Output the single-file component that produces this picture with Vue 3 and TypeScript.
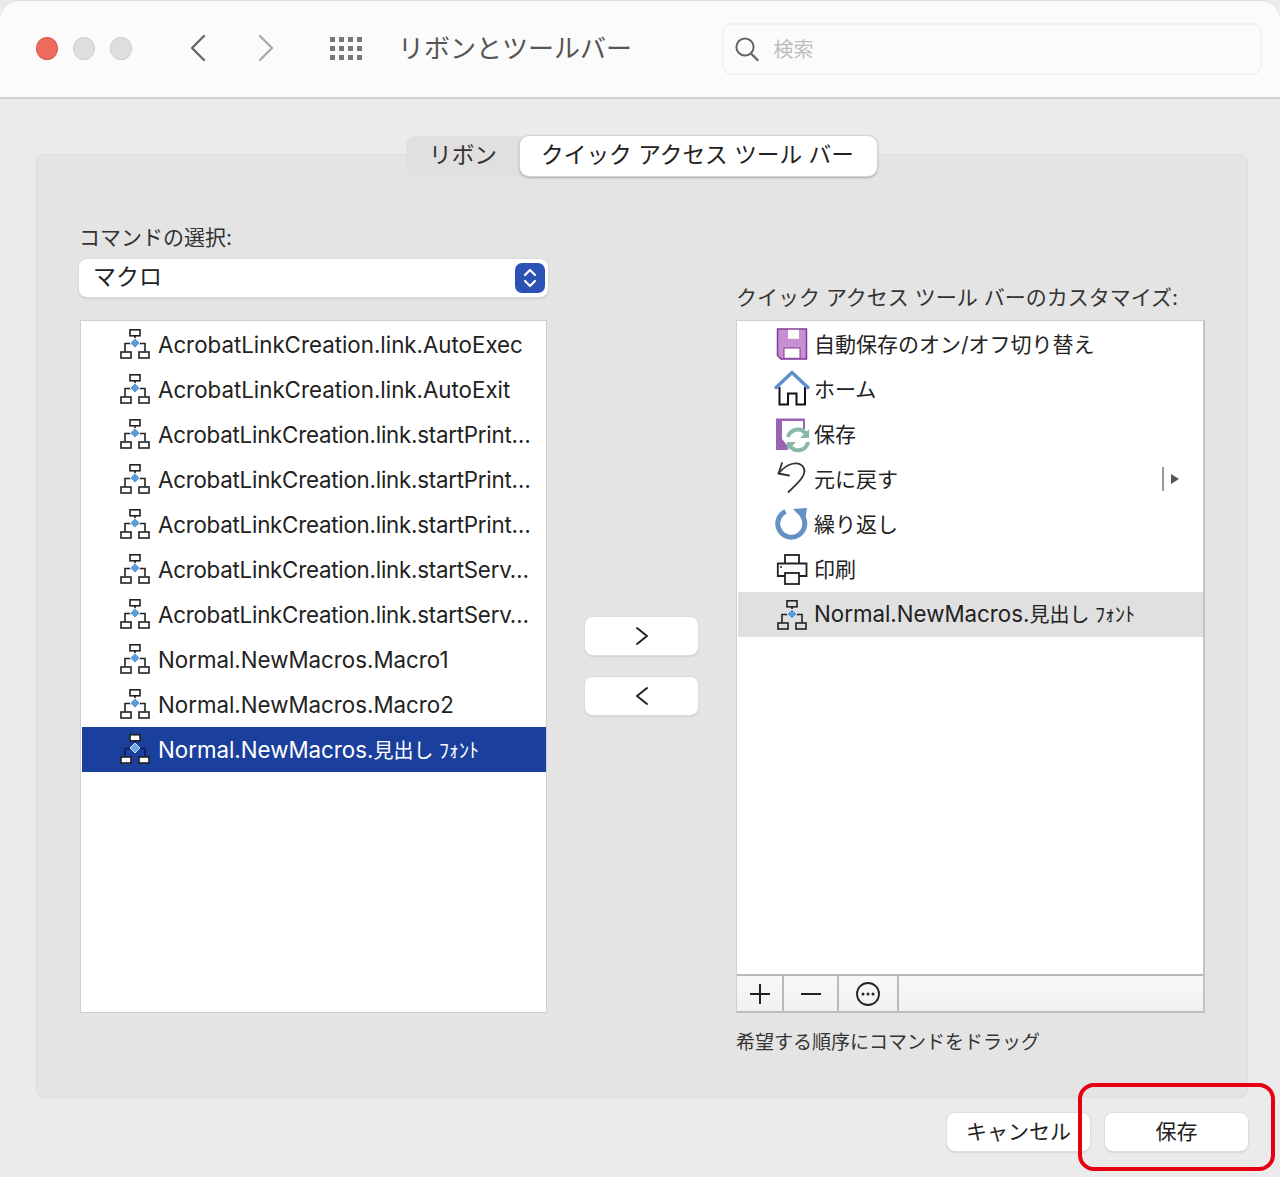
<script setup lang="ts">
const macroNames = [
  { name: 'AcrobatLinkCreation.link.AutoExec' },
  { name: 'AcrobatLinkCreation.link.AutoExit' },
  { name: 'AcrobatLinkCreation.link.startPrint…' },
  { name: 'AcrobatLinkCreation.link.startPrint…' },
  { name: 'AcrobatLinkCreation.link.startPrint…' },
  { name: 'AcrobatLinkCreation.link.startServ…' },
  { name: 'AcrobatLinkCreation.link.startServ…' },
  { name: 'Normal.NewMacros.Macro1' },
  { name: 'Normal.NewMacros.Macro2' },
  { name: 'Normal.NewMacros.', ja: '見出し ﾌｫﾝﾄ' }
];

const quickItems = [
  { icon: 'floppy', ja: '自動保存のオン/オフ切り替え' },
  { icon: 'home', ja: 'ホーム' },
  { icon: 'save', ja: '保存' },
  { icon: 'undo', ja: '元に戻す', more: true },
  { icon: 'redo', ja: '繰り返し' },
  { icon: 'print', ja: '印刷' },
  { icon: 'macro', name: 'Normal.NewMacros.', ja: '見出し ﾌｫﾝﾄ', selected: true }
];

const selectedMacro = macroNames.length - 1;
</script>

<template>
  <div class="window">
    <header class="toolbar">
      <div class="lights">
        <span class="light red"></span>
        <span class="light"></span>
        <span class="light"></span>
      </div>
      <svg class="nav-icon" width="18" height="28" viewBox="0 0 18 28" fill="none">
        <path d="M15 2L3 14L15 26" stroke="#666" stroke-width="2.4" stroke-linecap="round" stroke-linejoin="round" />
      </svg>
      <svg class="nav-icon next" width="18" height="28" viewBox="0 0 18 28" fill="none">
        <path d="M3 2L15 14L3 26" stroke="#aaa" stroke-width="2.4" stroke-linecap="round" stroke-linejoin="round" />
      </svg>
      <div class="apps">
        <span v-for="n in 12" :key="n"></span>
      </div>
      <h1 class="title">リボンとツールバー</h1>
      <div class="search">
        <svg width="26" height="26" viewBox="0 0 26 26" fill="none">
          <circle cx="11" cy="11" r="8.6" stroke="#666" stroke-width="2" />
          <path d="M17 17.5L23.5 24" stroke="#666" stroke-width="2.4" stroke-linecap="round" />
        </svg>
        <span>検索</span>
      </div>
    </header>

    <main class="content">
      <div class="tabs">
        <div class="tab">リボン</div>
        <div class="tab active">クイック アクセス ツール バー</div>
      </div>

      <section class="panel">
        <div class="col">
          <div class="label">コマンドの選択:</div>
          <div class="select">
            <span class="select-text">マクロ</span>
            <div class="stepper">
              <svg width="16" height="24" viewBox="0 0 16 24" fill="none">
                <path d="M3 9L8 4L13 9M3 15L8 20L13 15" stroke="#fff" stroke-width="2.2" stroke-linecap="round" stroke-linejoin="round" />
              </svg>
            </div>
          </div>
          <ul class="list left-list">
            <li
              v-for="(item, i) in macroNames"
              :key="i"
              class="row"
              :class="{ selected: i === selectedMacro, cut: item.name.endsWith('…') }"
            >
              <svg class="macro" width="30" height="32" viewBox="0 0 30 32" fill="none">
                <path d="M15 7V15M5 23.5V15.500H25V23.500" :stroke="i === selectedMacro ? '#0d1f50' : '#222'" stroke-width="1.600" />
                <rect x="10" y="1.800" width="10" height="6" :fill="i === selectedMacro ? '#fff' : 'none'" stroke="#222" stroke-width="1.600" />
                <rect x="1" y="24" width="10" height="6" :fill="i === selectedMacro ? '#fff' : 'none'" stroke="#222" stroke-width="1.600" />
                <rect x="19" y="24" width="10" height="6" :fill="i === selectedMacro ? '#fff' : 'none'" stroke="#222" stroke-width="1.600" />
                <path d="M15 10L20 15L15 20L10 15Z" :fill="i === selectedMacro ? '#6ea6ea' : '#5b9bd8'" stroke="#fff" stroke-width=".8" />
              </svg>
              <span class="name">{{ item.name }}<span v-if="item.ja" class="ja tail">{{ item.ja }}</span></span>
            </li>
          </ul>
        </div>

        <div class="mid">
          <button class="btn move">
            <svg width="14" height="20" viewBox="0 0 14 20" fill="none">
              <path d="M2 2L12 10L2 18" stroke="#222" stroke-width="2" stroke-linecap="round" stroke-linejoin="round" />
            </svg>
          </button>
          <button class="btn move">
            <svg width="14" height="20" viewBox="0 0 14 20" fill="none">
              <path d="M12 2L2 10L12 18" stroke="#222" stroke-width="2" stroke-linecap="round" stroke-linejoin="round" />
            </svg>
          </button>
        </div>

        <div class="col right">
          <div class="label">クイック アクセス ツール バーのカスタマイズ:</div>
          <div class="list right-list">
            <ul class="quick">
              <li
                v-for="item in quickItems"
                :key="item.icon"
                class="row"
                :class="{ current: item.selected }"
              >
                <svg class="qicon" width="38" height="38" viewBox="0 0 38 38" fill="none">
                  <g v-if="item.icon === 'floppy'">
                    <path d="M4.500 4H33.500V34H8L4.500 30.500Z" fill="#c58fd2" stroke="#86399a" stroke-width="1.500" />
                    <rect x="15" y="4.800" width="11" height="9" fill="#fff" />
                    <rect x="11" y="23" width="16" height="10.300" fill="#fff" stroke="#86399a" stroke-width="1" />
                  </g>
                  <g v-else-if="item.icon === 'home'">
                    <path d="M6.500 17V34.500H15V23.500H23.500V34.500H32V17" stroke="#111" stroke-width="2" />
                    <path d="M2 18.500L19 2.500L36 18.500" stroke="#5b8fc9" stroke-width="3.400" stroke-linejoin="miter" />
                  </g>
                  <g v-else-if="item.icon === 'save'">
                    <path d="M3 3.500H32V14H30V6H9V24L14 30V35H3Z" fill="#9a62b2" />
                    <path d="M15 22A10 10 0 0 1 33 19" stroke="#88b8a8" stroke-width="4" />
                    <path d="M35 27A10 10 0 0 1 17 31" stroke="#88b8a8" stroke-width="4" />
                    <path d="M36 14V23H27Z" fill="#88b8a8" />
                    <path d="M14 36V27H23Z" fill="#88b8a8" />
                  </g>
                  <g v-else-if="item.icon === 'undo'">
                    <path d="M9 3L5.500 13.500L16 15.500" stroke="#333" stroke-width="1.800" stroke-linecap="round" stroke-linejoin="round" />
                    <path d="M5.500 13.500C14 3 26 0 30.500 7.500C34 14 28 20 15.500 32" stroke="#333" stroke-width="1.800" stroke-linecap="round" />
                  </g>
                  <g v-else-if="item.icon === 'redo'">
                    <path d="M12.500 6.500A13.500 13.500 0 1 0 29 10.500" stroke="#6492c6" stroke-width="5" />
                    <path d="M20 4L34 3L32 16.500Z" fill="#6492c6" />
                  </g>
                  <g v-else-if="item.icon === 'print'">
                    <rect x="12" y="5" width="14" height="12" fill="#fff" stroke="#222" stroke-width="1.800" />
                    <path d="M12 26H4.800V13.500H33.500V26H26" fill="#fff" />
                    <path d="M12 26H4.800V13.500H33.500V26H26" stroke="#222" stroke-width="1.800" />
                    <rect x="12" y="23" width="14" height="11" fill="#fff" stroke="#222" stroke-width="1.800" />
                    <circle cx="8" cy="17" r="1" fill="#222" />
                  </g>
                  <g v-else transform="translate(4 4)">
                    <path d="M15 7V15M5 23.500V15.500H25V23.500" stroke="#222" stroke-width="1.600" />
                    <rect x="10" y="1.800" width="10" height="6" stroke="#222" stroke-width="1.600" />
                    <rect x="1" y="24" width="10" height="6" stroke="#222" stroke-width="1.600" />
                    <rect x="19" y="24" width="10" height="6" stroke="#222" stroke-width="1.600" />
                    <path d="M15 10L20 15L15 20L10 15Z" fill="#5b9bd8" stroke="#fff" stroke-width=".8" />
                  </g>
                </svg>
                <span class="name">{{ item.name }}<span class="ja" :class="{ tail: item.name }">{{ item.ja }}</span></span>
                <span v-if="item.more" class="more"></span>
              </li>
            </ul>
            <div class="list-footer">
              <div class="foot-btn plus">
                <svg width="22" height="22" viewBox="0 0 22 22" fill="none">
                  <path d="M11 1V21M1 11H21" stroke="#222" stroke-width="2" />
                </svg>
              </div>
              <div class="foot-btn minus">
                <svg width="22" height="22" viewBox="0 0 22 22" fill="none">
                  <path d="M1 11H21" stroke="#222" stroke-width="2" />
                </svg>
              </div>
              <div class="foot-btn dots">
                <svg width="26" height="26" viewBox="0 0 26 26" fill="none">
                  <circle cx="13" cy="13" r="11" stroke="#222" stroke-width="1.800" />
                  <circle cx="8" cy="13" r="1.500" fill="#222" />
                  <circle cx="13" cy="13" r="1.500" fill="#222" />
                  <circle cx="18" cy="13" r="1.500" fill="#222" />
                </svg>
              </div>
            </div>
          </div>
          <div class="hint">希望する順序にコマンドをドラッグ</div>
        </div>
      </section>

      <footer class="actions">
        <button class="btn action">キャンセル</button>
        <button class="btn action">保存</button>
      </footer>
    </main>

    <div class="highlight"></div>
  </div>
</template>

<style scoped>
* {
  box-sizing: border-box;
  margin: 0;
  padding: 0;
}

.window {
  position: relative;
  height: 1177px;
  overflow: hidden;
  background: #ebebeb;
  font-family: Inter, "Noto Sans CJK JP", sans-serif;
  color: #222;
}

.toolbar {
  display: flex;
  align-items: center;
  height: 99px;
  padding: 0 18px 2px 36px;
  background: #fbfbfb;
  border-top: 1px solid #ddd;
  border-bottom: 2px solid #d2d2d2;
  border-radius: 20px 20px 0 0;
}

.lights {
  display: flex;
  gap: 15px;
}

.light {
  width: 22px;
  height: 23px;
  border-radius: 50%;
  background: #dedede;
  border: 1px solid #d0d0d0;
}

.light.red {
  background: #ee6a5f;
  border-color: #dd5a50;
}

.nav-icon {
  margin-left: 57px;
}

.nav-icon.next {
  margin-left: 50px;
}

.apps {
  display: grid;
  grid-template-columns: repeat(4, 5px);
  grid-auto-rows: 5px;
  gap: 4px;
  margin-left: 55px;
}

.apps span {
  background: #777;
}

.title {
  margin: 0 0 4px 36px;
  width: 324px;
  font-size: 26px;
  font-weight: 400;
  color: #555;
  white-space: nowrap;
}

.search {
  display: flex;
  align-items: center;
  gap: 14px;
  width: 541px;
  height: 52px;
  padding-left: 10px;
  margin-top: 1px;
  background: #fbfbfb;
  border: 2px solid #f2f2f2;
  border-radius: 9px;
  font-size: 20px;
  color: #bcbcbc;
}

.content {
  display: flex;
  flex-direction: column;
  padding: 37px 32px 0 36px;
}

.tabs {
  position: relative;
  z-index: 1;
  display: flex;
  align-self: flex-start;
  margin: 0 0 -22px 370px;
  height: 40px;
  background: #e0e0e0;
  border-radius: 9px;
}

.tab {
  width: 114px;
  line-height: 37px;
  text-align: center;
  font-size: 22.700px;
  color: #333;
}

.tab.active {
  width: 357px;
  padding-right: 2px;
  background: #fff;
  border-radius: 9px;
  box-shadow: 0 0 0 1px #d4d4d4, 0 1px 2px 1px #aaa;
  color: #222;
  white-space: nowrap;
}

.panel {
  display: flex;
  align-items: flex-start;
  height: 944px;
  padding: 69px 0 0 42px;
  background: #e4e4e4;
  border: 1px solid #dedede;
  border-radius: 8px;
}

.col {
  display: flex;
  flex-direction: column;
  width: 468px;
}

.col.right {
  width: 469px;
  padding-top: 60px;
}

.label {
  height: 28px;
  line-height: 28px;
  font-size: 21px;
  color: #333;
  white-space: nowrap;
}

.select {
  display: flex;
  align-items: center;
  justify-content: space-between;
  height: 38px;
  margin: 7px -1px 0 0;
  padding: 0 3px 0 14px;
  background: #fff;
  border-radius: 8px;
  box-shadow: 0 0 0 1px #dcdcdc, 0 1px 2px #aaa;
  font-size: 23px;
}

.select-text {
  margin-bottom: 6px;
}

.stepper {
  display: flex;
  align-items: center;
  justify-content: center;
  width: 30px;
  height: 30px;
  background: #2b52b4;
  border-radius: 7px;
}

.list {
  height: 693px;
  margin-top: 23px;
  padding: 0.500px 0 0 1px;
  list-style: none;
  background: #fff;
  border: 1px solid #cfcfcf;
}

.left-list {
  margin-left: 1px;
}

.right-list {
  display: flex;
  flex-direction: column;
  margin-top: 8px;
  padding-bottom: 0;
  border-right: 2px solid #c4c4c4;
  border-bottom: 2px solid #bcbcbc;
}

.quick {
  flex: 1;
  list-style: none;
}

.row {
  display: flex;
  align-items: center;
  height: 45px;
  white-space: nowrap;
  font-size: 22.300px;
}

.quick .name {
  margin-bottom: 3px;
}

.quick .current .name {
  margin-bottom: 1px;
}

.cut .name {
  letter-spacing: -0.23px;
}

.ja {
  font-size: 21px;
}

.ja.tail {
  font-size: 20px;
}

.left-list .row {
  gap: 8px;
  padding-left: 38px;
}

.macro {
  margin-top: -1px;
}

.row.selected {
  background: #1b3f9d;
  color: #fff;
}

.quick .row {
  gap: 3px;
  padding-left: 35px;
  padding-right: 26px;
}

.qicon {
  flex: none;
  overflow: visible;
}

.row.current {
  background: #e0e0e0;
}

.more {
  position: relative;
  margin-left: auto;
  width: 15px;
  height: 24px;
  border-left: 2px solid #9a9a9a;
}

.more::after {
  content: "";
  position: absolute;
  left: 7px;
  top: 7px;
  border-left: 8px solid #555;
  border-top: 5px solid transparent;
  border-bottom: 5px solid transparent;
}

.list-footer {
  display: flex;
  flex: none;
  height: 37px;
  margin: 0 0 0 -1px;
  background: linear-gradient(#f8f8f8, #f1f1f1);
  border-top: 2px solid #b9b9b9;
}

.foot-btn {
  display: flex;
  align-items: center;
  justify-content: center;
  border-right: 2px solid #b9b9b9;
}

.plus {
  width: 47px;
}

.minus {
  width: 55px;
}

.dots {
  width: 60px;
}

.hint {
  margin-top: 16px;
  font-size: 19px;
  line-height: 28px;
  color: #333;
}

.mid {
  display: flex;
  flex-direction: column;
  gap: 22px;
  width: 113px;
  margin: 393px 38px 0 38px;
}

.btn {
  display: flex;
  align-items: center;
  justify-content: center;
  height: 38px;
  background: #fff;
  border: none;
  border-radius: 8px;
  box-shadow: 0 0 0 1px #dedede, 0 1px 2px #aaa;
  font-family: inherit;
  color: #222;
}

.actions {
  display: flex;
  justify-content: flex-end;
  gap: 15px;
  margin-top: 15px;
}

.action {
  width: 143px;
  padding-bottom: 4px;
  font-size: 21px;
}

/* annotation drawn over the screenshot */
.highlight {
  position: absolute;
  left: 1078px;
  top: 1083px;
  width: 197px;
  height: 88px;
  border: 4px solid #e60012;
  border-radius: 16px;
}
</style>

<style>
body {
  margin: 0;
  background: #fff;
}
</style>
